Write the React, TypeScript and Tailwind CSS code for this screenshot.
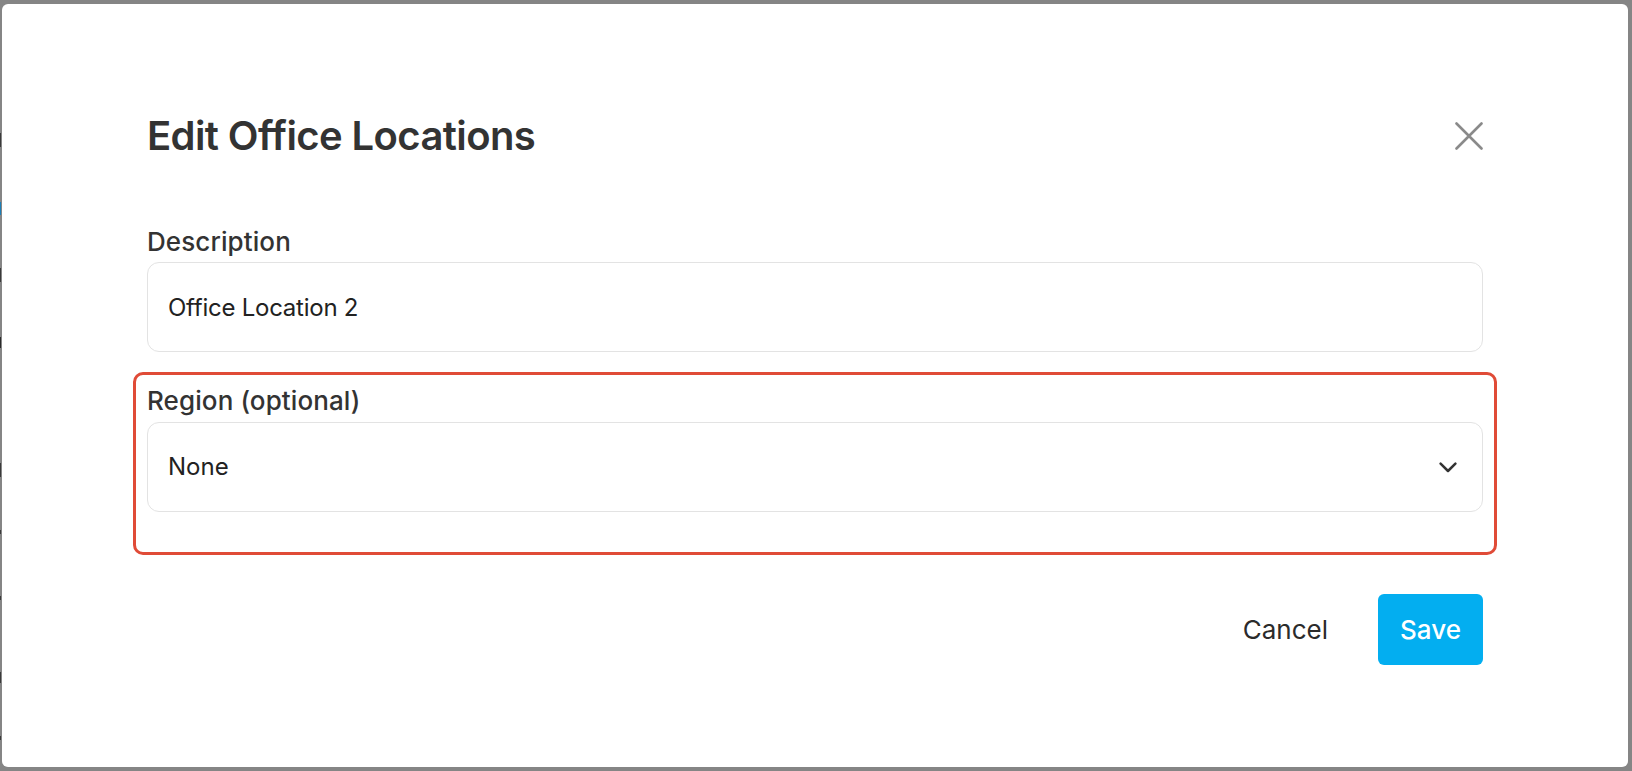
import { useState } from "react";

const edgeMarks = [
  { top: 133, h: 14, color: "bg-[#3a3a3a]" },
  { top: 202, h: 13, color: "bg-[#1b7fb8]" },
  { top: 268, h: 14, color: "bg-[#3a3a3a]" },
  { top: 337, h: 11, color: "bg-[#2a2a2a]" },
  { top: 463, h: 14, color: "bg-[#3a3a3a]" },
  { top: 530, h: 4, color: "bg-[#3a3a3a]" },
  { top: 596, h: 4, color: "bg-[#3a3a3a]" },
  { top: 672, h: 11, color: "bg-[#3a3a3a]" },
  { top: 736, h: 4, color: "bg-[#3a3a3a]" },
];

export default function App() {
  const [description, setDescription] = useState("Office Location 2");

  return (
    <div className="relative w-full h-[771px] bg-[#858585] pl-[2px] pt-[4px] pr-[4px] pb-[4px] font-['Inter',sans-serif] text-[#333333] overflow-hidden">
      {/* bits of the page underneath, peeking out at the left edge */}
      {edgeMarks.map((m) => (
        <span
          key={m.top}
          className={`absolute left-0 w-[1px] ${m.color}`}
          style={{ top: m.top, height: m.h }}
        />
      ))}

      <div className="w-full h-full bg-white rounded-[6px] px-[145px] pt-[108px] flex flex-col">
        {/* Header */}
        <div className="flex items-center justify-between h-[48px]">
          <h1 className="text-[40px] leading-[48px] font-semibold tracking-[-0.6px] text-[#333333]">
            Edit Office Locations
          </h1>
          <button className="w-[28px] h-[28px] flex items-center justify-center text-[#8a8a8a]">
            <svg width="28" height="28" viewBox="0 0 28 28" fill="none">
              <path
                d="M1.5 1.5L26.5 26.5M26.5 1.5L1.5 26.5"
                stroke="currentColor"
                strokeWidth="2.6"
                strokeLinecap="round"
              />
            </svg>
          </button>
        </div>

        {/* Description */}
        <label className="mt-[66px] mb-[4px] text-[26px] leading-[32px] font-medium tracking-[0.1px] text-[#333333]">
          Description
        </label>
        <input
          value={description}
          onChange={(e) => setDescription(e.target.value)}
          className="h-[90px] w-full rounded-[12px] border border-[#e3e3e3] px-[20px] text-[24px] tracking-[-0.25px] text-[#222222] outline-none"
        />

        {/* Region (highlighted) */}
        <div className="mt-[20px] -mx-[14px] border-[3px] border-[#e04b37] rounded-[10px] px-[11px] pt-[10px] pb-[40px]">
          <div className="mb-[5px] text-[26px] leading-[32px] font-medium tracking-[0.1px] text-[#333333]">
            Region (optional)
          </div>
          <div className="h-[90px] w-full rounded-[12px] border border-[#e3e3e3] pl-[20px] pr-[25px] flex items-center justify-between">
            <span className="text-[24px] text-[#222222]">None</span>
            <svg width="18" height="11" viewBox="0 0 18 11" fill="none" className="text-[#333333]">
              <path
                d="M1.6 1.6L9 9L16.4 1.6"
                stroke="currentColor"
                strokeWidth="2.5"
                strokeLinecap="round"
                strokeLinejoin="round"
              />
            </svg>
          </div>
        </div>

        {/* Footer */}
        <div className="mt-[39px] flex items-center justify-end gap-[28px]">
          <button className="h-[71px] px-[22px] text-[26px] text-[#2b2b2b]">Cancel</button>
          <button className="h-[71px] w-[105px] rounded-[6px] bg-[#03aef0] text-[26px] font-medium text-white">
            Save
          </button>
        </div>
      </div>
    </div>
  );
}
